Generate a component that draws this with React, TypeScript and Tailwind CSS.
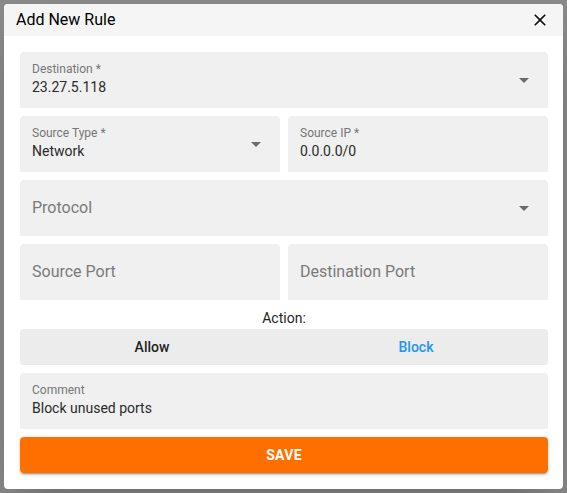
import React from "react";

function ArrowDown() {
  return (
    <svg width="24" height="24" viewBox="0 0 24 24" className="absolute right-[12px] top-1/2 -translate-y-1/2" fill="#6b6b6b">
      <path d="M7 10l5 5 5-5z" />
    </svg>
  );
}

function Field({ label, value, select }: { label: string; value?: string; select?: boolean }) {
  return (
    <div className="relative h-[56px] shrink-0 bg-[#f0f0f0] rounded-t-[4px] px-[12px] w-full min-w-0">
      {value !== undefined ? (
        <div className="flex flex-col pt-[10px]">
          <div className="text-[12px] leading-[14px] text-[#767676]">{label}</div>
          <div className="text-[14px] leading-[20px] mt-[1px] text-[#2a2a2a]">{value}</div>
        </div>
      ) : (
        <div className="h-full flex items-center text-[16px] text-[#7a7a7a]">{label}</div>
      )}
      {select && <ArrowDown />}
    </div>
  );
}

export default function App() {
  return (
    <div className="w-[567px] h-[493px] bg-[#8a8a8a] pt-[4px] pl-[4px]" style={{ fontFamily: "Roboto, 'Liberation Sans', sans-serif" }}>
      <div className="w-[559px] h-[485px] bg-white rounded-[4px] shadow-2xl flex flex-col overflow-hidden">
        <div className="h-[32px] shrink-0 bg-[#f5f5f5] flex items-center justify-between pl-[12px] pr-[13px]">
          <div className="text-[16px] text-black">Add New Rule</div>
          <svg width="20" height="20" viewBox="0 0 24 24" fill="#111">
            <path d="M19 6.41 17.59 5 12 10.59 6.41 5 5 6.41 10.59 12 5 17.59 6.41 19 12 13.41 17.59 19 19 17.59 13.41 12z" />
          </svg>
        </div>
        <div className="flex flex-col pt-[16px] pl-[16px] pr-[15px]">
          <div className="flex flex-col gap-[8px]">
            <Field label="Destination *" value="23.27.5.118" select />
            <div className="grid grid-cols-2 gap-[8px]">
              <Field label="Source Type *" value="Network" select />
              <Field label="Source IP *" value="0.0.0.0/0" />
            </div>
            <Field label="Protocol" select />
            <div className="grid grid-cols-2 gap-[8px]">
              <Field label="Source Port" />
              <Field label="Destination Port" />
            </div>
          </div>
          <div className="pt-[8px] h-[29px] shrink-0 text-center text-[14px] leading-[20px] text-[#1f1f1f]">Action:</div>
          <div className="h-[36px] shrink-0 bg-[#ececec] rounded-[4px] flex">
            <div className="flex-1 flex items-center justify-center text-[14px] font-medium text-[#1f1f1f]">Allow</div>
            <div className="flex-1 flex items-center justify-center text-[14px] font-medium text-[#2196f3]">Block</div>
          </div>
          <div className="mt-[8px]">
            <Field label="Comment" value="Block unused ports" />
          </div>
          <div className="mt-[8px] h-[36px] shrink-0 bg-[#ff6f00] rounded-[4px] flex items-center justify-center text-white text-[14px] font-bold uppercase tracking-[0.02em] shadow-[0_3px_1px_-2px_rgba(0,0,0,0.2),0_2px_2px_0_rgba(0,0,0,0.14),0_1px_5px_0_rgba(0,0,0,0.12)]">
            Save
          </div>
        </div>
      </div>
    </div>
  );
}
